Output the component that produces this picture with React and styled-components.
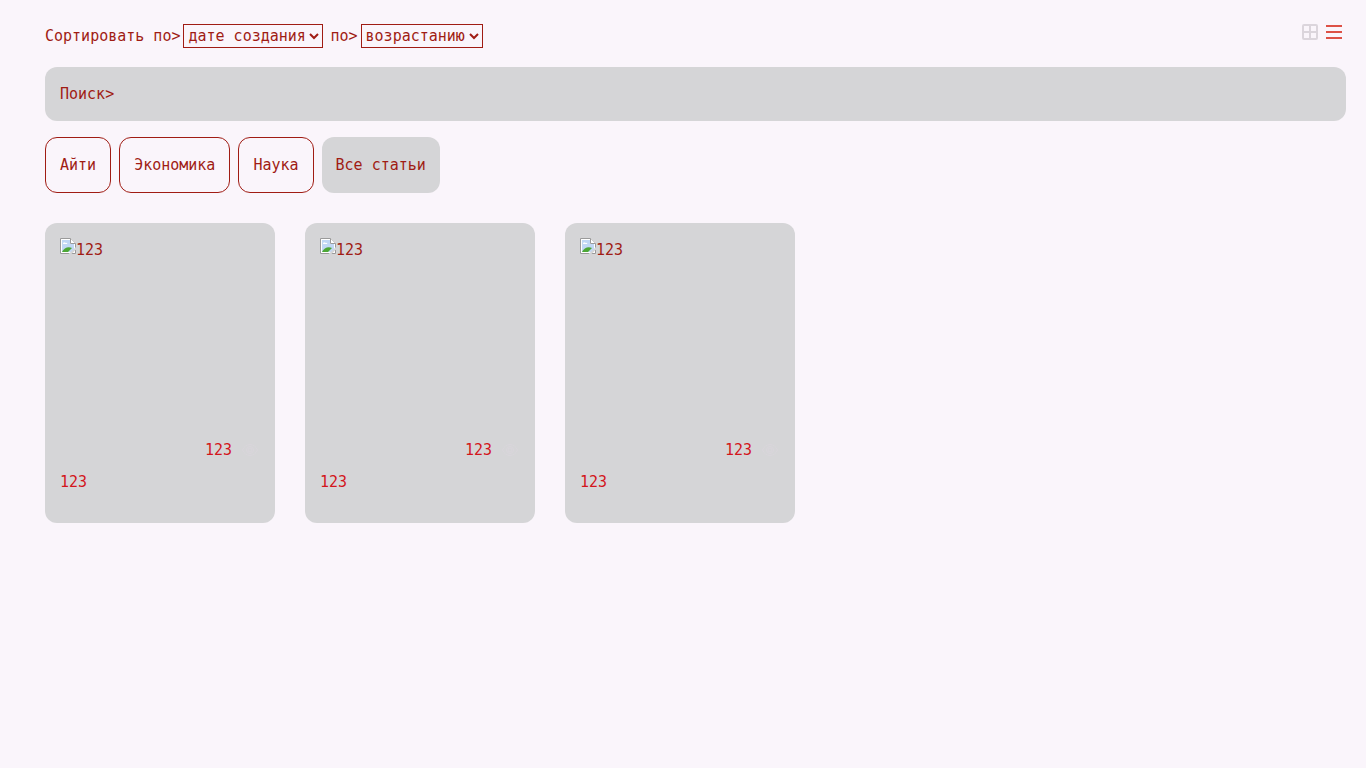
import React from "react";
import styled, { createGlobalStyle } from "styled-components";

const GlobalStyle = createGlobalStyle`
  *, *::before, *::after { box-sizing: border-box; }
  body {
    margin: 0;
    background: #faf5fb;
    color: #a01c14;
    font: 15px/24px "DejaVu Sans Mono", monospace;
  }
  button, input, select { font: inherit; color: inherit; margin: 0; }
`;

const Page = styled.main`
  padding: 20px 20px 20px 45px;
`;

const Toolbar = styled.header`
  display: flex;
  justify-content: space-between;
  align-items: flex-start;
`;

const Sort = styled.div`
  display: flex;
  align-items: center;
  gap: 7px;
  padding-top: 4px;
`;

const SortLabel = styled.label`
  display: flex;
  align-items: center;
  gap: 3px;
`;

const Select = styled.select`
  height: 24px;
  padding: 0;
  border: 1px solid #a01c14;
  border-radius: 0;
  background: transparent;
  line-height: 22px;
`;

const Views = styled.div`
  display: flex;
`;

const ViewButton = styled.button`
  display: flex;
  padding: 0;
  border: 0;
  background: none;
  color: ${(p) => (p.$active ? "#dd5146" : "#dbd5dc")};
`;

const Search = styled.label`
  display: flex;
  align-items: center;
  height: 54px;
  margin-top: 19px;
  padding: 0 15px;
  border-radius: 12px;
  background: #d5d5d7;
`;

const SearchInput = styled.input`
  flex: 1;
  min-width: 0;
  border: 0;
  outline: 0;
  background: transparent;
`;

const Tags = styled.nav`
  display: flex;
  gap: 8px;
  margin-top: 16px;
`;

const Tag = styled.button`
  height: 56px;
  padding: 0 14px;
  border: ${(p) => (p.$active ? "0" : "1px solid #a01c14")};
  border-radius: 12px;
  background: ${(p) => (p.$active ? "#d5d5d7" : "transparent")};
`;

const Cards = styled.section`
  display: flex;
  flex-wrap: wrap;
  gap: 30px;
  margin-top: 30px;
`;

const Card = styled.article`
  width: 230px;
  min-height: 300px;
  padding: 15px;
  border-radius: 12px;
  background: #d5d5d7;
`;

const Cover = styled.div`
  display: flex;
  height: 200px;
`;

const Meta = styled.div`
  display: flex;
  justify-content: flex-end;
  align-items: center;
  gap: 8px;
  color: #d3151c;
`;

const Title = styled.p`
  margin: 8px 0 0;
  color: #d3151c;
`;

function GridIcon() {
  return (
    <svg width="24" height="24" viewBox="0 0 24 24" fill="none" stroke="currentColor" strokeWidth="2" aria-hidden="true">
      <rect x="5" y="5" width="14" height="14" rx="1" />
      <path d="M12 5v14M5 12h14" />
    </svg>
  );
}

function ListIcon() {
  return (
    <svg width="24" height="24" viewBox="0 0 24 24" fill="currentColor" aria-hidden="true">
      <path d="M4 5h16v2H4zM4 11h16v2H4zM4 17h16v2H4z" />
    </svg>
  );
}

function EyeIcon() {
  return (
    <svg width="20" height="20" viewBox="0 0 20 20" fill="none" stroke="#dad6dc" aria-hidden="true">
      <path d="M2.500 10C4 6.500 6.800 4.500 10 4.500s6 2 7.500 5.500c-1.500 3.500-4.300 5.500-7.500 5.500S4 13.500 2.500 10z" />
      <circle cx="10" cy="10" r="3.500" />
      <circle cx="10" cy="10" r="2" />
    </svg>
  );
}

function BrokenImage() {
  return (
    <svg width="16" height="16" viewBox="0 0 16 16" aria-hidden="true">
      <path d="M.5 .5h10l5 5v10H.5z" fill="#fff" stroke="#9a9a9a" />
      <path d="M2 2h8v4h4v8H2z" fill="#c1d8f5" />
      <path d="M3 6c0-2 2-2 2-1 2-1 3 1 2 1H3z" fill="#fff" />
      <path d="M2 14c2-4 6-6 10-4l-4 4z" fill="#4da735" />
      <path d="M10.500 .5v5h5" fill="#fff" stroke="#9a9a9a" />
      <path d="M8.500 16l7.500-7v2.500L11.500 16z" fill="#d5d5d7" />
    </svg>
  );
}

const tags = ["Айти", "Экономика", "Наука", "Все статьи"];
const articles = [1, 2, 3].map((id) => ({ id, title: "123", views: 123 }));

export default function App() {
  return (
    <>
      <GlobalStyle />
      <Page>
        <Toolbar>
          <Sort>
            <SortLabel>
              Сортировать по&gt;
              <Select>
                <option>дате создания</option>
              </Select>
            </SortLabel>
            <SortLabel>
              по&gt;
              <Select>
                <option>возрастанию</option>
              </Select>
            </SortLabel>
          </Sort>
          <Views>
            <ViewButton type="button" aria-label="Плитка"><GridIcon /></ViewButton>
            <ViewButton type="button" aria-label="Список" $active><ListIcon /></ViewButton>
          </Views>
        </Toolbar>
        <Search>
          Поиск&gt;
          <SearchInput type="text" />
        </Search>
        <Tags>
          {tags.map((tag) => (
            <Tag key={tag} type="button" $active={tag === "Все статьи"}>{tag}</Tag>
          ))}
        </Tags>
        <Cards>
          {articles.map((a) => (
            <Card key={a.id}>
              <Cover><BrokenImage />{a.title}</Cover>
              <Meta>{a.views}<EyeIcon /></Meta>
              <Title>{a.title}</Title>
            </Card>
          ))}
        </Cards>
      </Page>
    </>
  );
}
